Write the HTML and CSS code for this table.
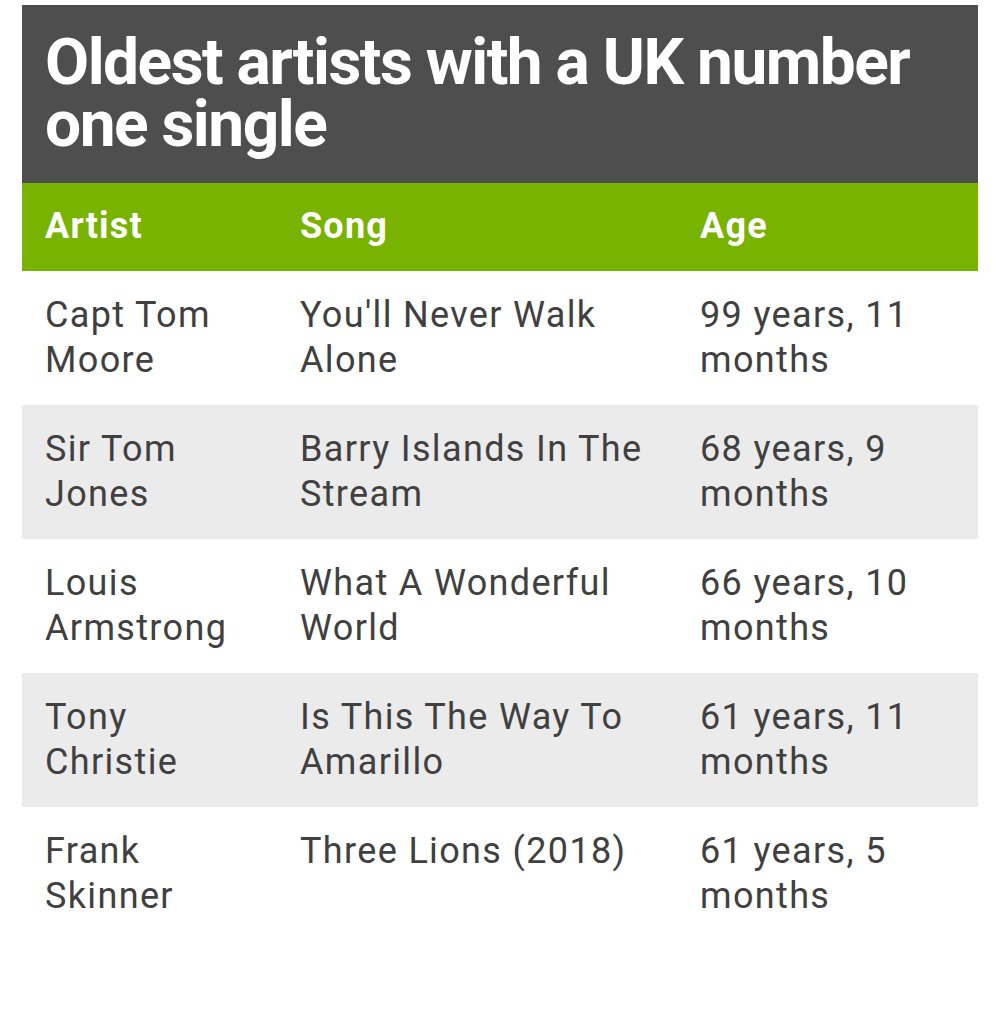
FILE: index.html
```html
<!DOCTYPE html>
<html lang="en">
<head>
<meta charset="utf-8">
<title>Oldest artists with a UK number one single</title>
<link rel="stylesheet" href="styles.css">
</head>
<body>
<div class="chart">
  <h1 class="title">Oldest artists with a UK number one single</h1>
  <table class="data">
    <colgroup>
      <col class="c1"><col class="c2"><col class="c3">
    </colgroup>
    <thead>
      <tr><th>Artist</th><th>Song</th><th>Age</th></tr>
    </thead>
    <tbody>
      <tr><td>Capt Tom Moore</td><td>You'll Never Walk Alone</td><td>99 years, 11 months</td></tr>
      <tr><td>Sir Tom Jones</td><td>Barry Islands In The Stream</td><td>68 years, 9 months</td></tr>
      <tr><td>Louis Armstrong</td><td>What A Wonderful World</td><td>66 years, 10 months</td></tr>
      <tr><td>Tony Christie</td><td>Is This The Way To Amarillo</td><td>61 years, 11 months</td></tr>
      <tr><td>Frank Skinner</td><td>Three Lions (2018)</td><td>61 years, 5 months</td></tr>
    </tbody>
  </table>
</div>
</body>
</html>
```
FILE: styles.css
```css
html, body {
  margin: 0;
  padding: 0;
  background: #ffffff;
}
body {
  font-family: Roboto, "Liberation Sans", sans-serif;
}
.chart {
  width: 956px;
  margin: 5px 0 0 22px;
}
.title {
  margin: 0;
  background: #4e4e4e;
  color: #ffffff;
  font-size: 64px;
  font-weight: 700;
  line-height: 62px;
  letter-spacing: -1.5px;
  padding: 27px 23px 27px;
}
.data {
  width: 956px;
  border-collapse: collapse;
  table-layout: fixed;
}
.c1 { width: 255px; }
.c2 { width: 400px; }
.c3 { width: 301px; }
.data th {
  background: #77b300;
  color: #ffffff;
  font-size: 36px;
  font-weight: 700;
  line-height: 45px;
  letter-spacing: 1.2px;
  text-align: left;
  padding: 21px 23px 22px;
}
.data td {
  color: #404040;
  font-size: 36px;
  font-weight: 400;
  line-height: 45px;
  letter-spacing: 1.35px;
  text-align: left;
  vertical-align: top;
  padding: 22px 23px 22px;
}
.data tbody tr:nth-child(even) td {
  background: #ebebeb;
}
```
